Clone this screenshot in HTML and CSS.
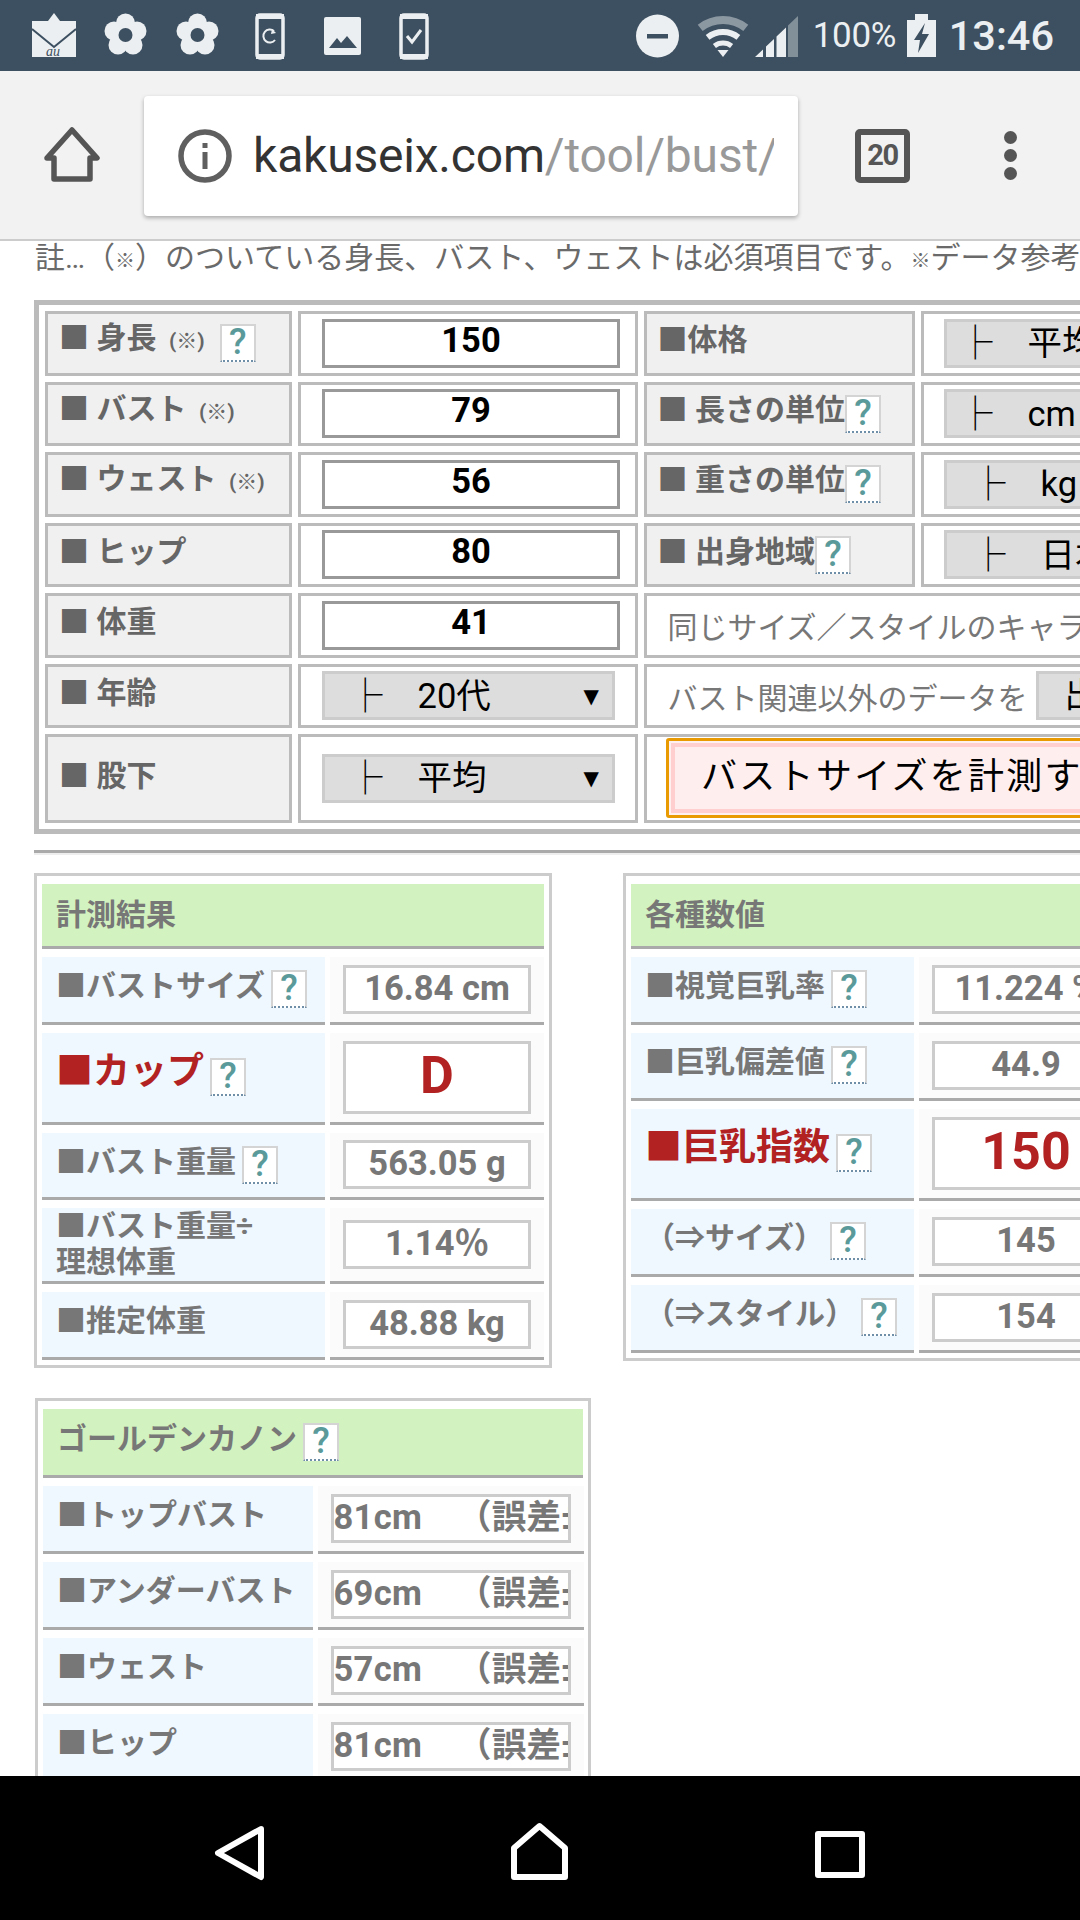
FILE: index.html
```html
<!DOCTYPE html>
<html lang="ja">
<head>
<meta charset="utf-8">
<title>バストサイズ計測</title>
<link rel="stylesheet" href="styles.css">
</head>
<body>
<div class="phone">
  <header class="status">
    <svg class="status-left" viewBox="30 0 400 71" width="400" height="71">
      <g fill="#eceff1">
        <path d="M32 21H48L54 13L60 21H76V57H32Z"/>
        <circle cx="125.500" cy="23" r="9.500"/><circle cx="137" cy="31" r="9.500"/><circle cx="133" cy="45" r="9.500"/><circle cx="118" cy="45" r="9.500"/><circle cx="114" cy="31" r="9.500"/>
        <circle cx="197.500" cy="23" r="9.500"/><circle cx="209" cy="31" r="9.500"/><circle cx="205" cy="45" r="9.500"/><circle cx="190" cy="45" r="9.500"/><circle cx="186" cy="31" r="9.500"/>
        <rect x="324" y="17" width="37" height="38" rx="2"/>
      </g>
      <path d="M32 29L54 47L76 29" fill="none" stroke="#3d5061" stroke-width="2"/>
      <text x="46" y="56" class="au">au</text>
      <circle cx="125.500" cy="35" r="7" fill="#3d5061"/>
      <circle cx="197.500" cy="35" r="7" fill="#3d5061"/>
      <g fill="none" stroke="#eceff1" stroke-width="3.500">
        <rect x="257" y="15" width="26" height="43" rx="3"/>
        <rect x="401" y="15" width="26" height="43" rx="3"/>
      </g>
      <g fill="#eceff1">
        <rect x="256" y="14" width="28" height="5"/><rect x="256" y="54" width="28" height="5"/>
        <rect x="400" y="14" width="28" height="5"/><rect x="400" y="54" width="28" height="5"/>
      </g>
      <path d="M274 31A6.500 6.500 0 1 0 275 40" fill="none" stroke="#eceff1" stroke-width="2"/>
      <path d="M272 29L276 33L271 34Z" fill="#eceff1"/>
      <path d="M407 36L412 42L421 30" fill="none" stroke="#eceff1" stroke-width="3"/>
      <path d="M329 48L337 38L341 43L347 36L357 48Z" fill="#3d5061"/>
    </svg>
    <div class="status-right">
      <svg class="status-icons" viewBox="636 0 164 71" width="164" height="71">
        <circle cx="658.500" cy="36" r="21.500" fill="#eceff1"/>
        <rect x="648" y="34" width="21" height="4.500" fill="#3d5061"/>
        <g fill="none" stroke="#eceff1">
          <path d="M701.200 27.800A37 37 0 0 1 746.800 27.800" stroke-width="8" opacity=".45"/>
          <path d="M708.600 37.300A25 25 0 0 1 739.400 37.300" stroke-width="6"/>
          <path d="M715.400 46A14 14 0 0 1 732.600 46" stroke-width="5"/>
        </g>
        <path d="M724 57L718.500 50H729.500Z" fill="#eceff1"/>
        <path d="M789 57V25.500L799 16V57Z" fill="#eceff1" opacity=".4"/>
        <path d="M756 57L764 49.500V57ZM767 57V46.500L775 39V57ZM777.500 57V36.500L787 27.500V57Z" fill="#eceff1"/>
      </svg>
      <span class="batt-text">100%</span>
      <svg class="batt" viewBox="908 0 30 71" width="30" height="71">
        <path d="M916 14H929V20H937V57H908V20H916Z" fill="#eceff1"/>
        <path d="M926 23L915 40H921L919 53L930 34H923Z" fill="#3d5061"/>
      </svg>
      <span class="clock">13:46</span>
    </div>
  </header>

  <nav class="toolbar">
    <svg class="tb-home" viewBox="0 0 56 56" width="56" height="56">
      <path d="M28 3L53 31H46V52H10V31H3Z" fill="none" stroke="#555" stroke-width="5.500" stroke-linejoin="round"/>
    </svg>
    <div class="urlbar">
      <svg class="info" viewBox="0 0 54 54" width="54" height="54">
        <circle cx="27" cy="27" r="24" fill="none" stroke="#5f5f5f" stroke-width="5.500"/>
        <rect x="24.500" y="23" width="5" height="17" fill="#5f5f5f"/>
        <rect x="24.500" y="14" width="5" height="5" fill="#5f5f5f"/>
      </svg>
      <div class="url"><span class="host">kakuseix.com</span><span class="path">/tool/bust/</span></div>
    </div>
    <div class="tabs">20</div>
    <div class="dots"><i></i><i></i><i></i></div>
  </nav>

  <main class="page">
    <p class="note">註…（<small>※</small>）のついている身長、バスト、ウェストは必須項目です。<small>※</small>データ参考</p>

    <section class="form">
      <div class="lab"><span class="t t-up">■ 身長 <small>(※)</small></span><span class="q q-first">?</span></div>
      <div class="val"><div class="inp">150</div></div>
      <div class="lab lab-r"><span class="t">■体格</span></div>
      <div class="val val-r"><div class="sel sel-a"><span class="tick">├</span><span>平均</span></div></div>

      <div class="lab"><span class="t t-up">■ バスト <small>(※)</small></span></div>
      <div class="val"><div class="inp">79</div></div>
      <div class="lab lab-r"><span class="t t-mid">■ 長さの単位</span><span class="q q-tight">?</span></div>
      <div class="val val-r"><div class="sel sel-a"><span class="tick">├</span><span>cm</span></div></div>

      <div class="lab"><span class="t t-up">■ ウェスト <small>(※)</small></span></div>
      <div class="val"><div class="inp">56</div></div>
      <div class="lab lab-r"><span class="t t-mid">■ 重さの単位</span><span class="q q-tight">?</span></div>
      <div class="val val-r"><div class="sel sel-b"><span class="tick">├</span><span>kg</span></div></div>

      <div class="lab"><span class="t">■ ヒップ</span></div>
      <div class="val"><div class="inp">80</div></div>
      <div class="lab lab-r"><span class="t">■ 出身地域</span><span class="q q-tight">?</span></div>
      <div class="val val-r"><div class="sel sel-b"><span class="tick">├</span><span>日本</span></div></div>

      <div class="lab"><span class="t">■ 体重</span></div>
      <div class="val"><div class="inp">41</div></div>
      <div class="val wide plain">同じサイズ／スタイルのキャラ</div>

      <div class="lab"><span class="t">■ 年齢</span></div>
      <div class="val"><div class="sel"><span class="tick">├</span><span class="grow">20代</span><span class="arrow">▼</span></div></div>
      <div class="val wide plain">バスト関連以外のデータを<div class="outbtn">出</div></div>

      <div class="lab"><span class="t t-low">■ 股下</span></div>
      <div class="val"><div class="sel"><span class="tick">├</span><span class="grow">平均</span><span class="arrow">▼</span></div></div>
      <div class="val wide btn-cell"><div class="submit">バストサイズを計測す</div></div>
    </section>

    <hr class="sep">

    <div class="results">
      <section class="box box-a">
        <h2 class="head">計測結果</h2>
        <div class="rows cols-a">
          <div class="k"><span class="t">■バストサイズ</span><span class="q">?</span></div>
          <div class="v"><div class="field">16.84 cm</div></div>
          <div class="k tall red"><span class="t">■カップ</span><span class="q">?</span></div>
          <div class="v tall"><div class="field big">D</div></div>
          <div class="k h67"><span class="t">■バスト重量</span><span class="q">?</span></div>
          <div class="v h67"><div class="field">563.05 g</div></div>
          <div class="k h76"><span class="two">■バスト重量÷<br>理想体重</span></div>
          <div class="v h76"><div class="field">1.14％</div></div>
          <div class="k"><span class="t">■推定体重</span></div>
          <div class="v"><div class="field">48.88 kg</div></div>
        </div>
      </section>

      <section class="box box-b">
        <h2 class="head">各種数値</h2>
        <div class="rows cols-b">
          <div class="k"><span class="t">■視覚巨乳率</span><span class="q">?</span></div>
          <div class="v"><div class="field">11.224 %</div></div>
          <div class="k"><span class="t">■巨乳偏差値</span><span class="q">?</span></div>
          <div class="v"><div class="field">44.9</div></div>
          <div class="k tall red"><span class="t">■巨乳指数</span><span class="q">?</span></div>
          <div class="v tall"><div class="field big">150</div></div>
          <div class="k"><span class="t">（⇒サイズ）</span><span class="q">?</span></div>
          <div class="v"><div class="field">145</div></div>
          <div class="k"><span class="t">（⇒スタイル）</span><span class="q">?</span></div>
          <div class="v"><div class="field">154</div></div>
        </div>
      </section>
    </div>

    <section class="box box-c">
      <h2 class="head"><span class="t">ゴールデンカノン</span><span class="q">?</span></h2>
      <div class="rows cols-c">
        <div class="k"><span class="t">■トップバスト</span></div>
        <div class="v"><div class="field left">81cm　（誤差±</div></div>
        <div class="k"><span class="t">■アンダーバスト</span></div>
        <div class="v"><div class="field left">69cm　（誤差±</div></div>
        <div class="k"><span class="t">■ウェスト</span></div>
        <div class="v"><div class="field left">57cm　（誤差±</div></div>
        <div class="k"><span class="t">■ヒップ</span></div>
        <div class="v"><div class="field left">81cm　（誤差±</div></div>
      </div>
    </section>
  </main>

  <footer class="navbar">
    <svg viewBox="0 1776 1080 144" width="1080" height="144">
      <g fill="none" stroke="#fff" stroke-width="6" stroke-linejoin="round">
        <path d="M261 1829L218 1853L261 1877Z"/>
        <path d="M514 1877V1848L539.500 1826L565 1848V1877Z"/>
        <rect x="818" y="1834" width="44" height="41"/>
      </g>
    </svg>
  </footer>
</div>
</body>
</html>
```

FILE: styles.css
```css
* { box-sizing: border-box; }
html, body { margin: 0; padding: 0; }
body {
  width: 1080px;
  height: 1920px;
  overflow: hidden;
  background: #fff;
  font-family: Roboto, "Noto Sans CJK JP", sans-serif;
}
.phone { display: flex; flex-direction: column; width: 1080px; height: 1920px; overflow: hidden; }

/* status bar */
.status { flex: none; height: 71px; background: #3d5061; display: flex; align-items: center; padding-left: 30px; color: #eceff1; }
.status-left { display: block; flex: none; }
.au { font: italic 14px "Liberation Serif", serif; fill: #3d5061; }
.status-right { margin-left: auto; display: flex; align-items: center; height: 71px; padding-right: 26px; }
.status-icons { display: block; }
.batt { display: block; margin-left: 9px; }
.batt-text { font-size: 35px; margin-left: 14px; width: 85px; letter-spacing: -.3px; }
.clock { font-size: 41.500px; margin-left: 12px; font-weight: 500; }

/* browser toolbar */
.toolbar { flex: none; height: 170px; background: #f2f2f2; border-bottom: 2px solid #ccc; display: flex; align-items: flex-start; }
.tb-home { display: block; flex: none; margin: 56px 0 0 44px; }
.urlbar { flex: none; width: 654px; height: 120px; margin: 25px 0 0 44px; background: #fff; border-radius: 4px; box-shadow: 0 2px 4px rgba(0,0,0,.3); display: flex; align-items: center; padding: 0 24px 0 34px; }
.info { display: block; flex: none; margin: 0 21px 0 0; }
.url { font-size: 48px; white-space: nowrap; overflow: hidden; flex: 1; min-width: 0; letter-spacing: -.2px; padding-bottom: 2px; }
.host { color: #333; }
.path { color: #999; }
.tabs { flex: none; width: 55px; height: 54px; margin: 58px 0 0 57px; border: 6px solid #555; border-radius: 5px; color: #555; font: bold 29px/41px Roboto, sans-serif; text-align: center; letter-spacing: -1.500px; }
.dots { flex: none; display: flex; flex-direction: column; gap: 5px; margin: 60px 0 0 94px; }
.dots i { display: block; width: 13px; height: 13px; border-radius: 50%; background: #555; }

/* page */
.page { flex: 1; min-height: 0; overflow: hidden; }
.note { margin: 0; height: 59px; padding: 0 0 0 35px; font-size: 30px; line-height: 34px; color: #6a6a6a; white-space: nowrap; overflow: hidden; }
.note small { font-size: 20px; }

/* main form */
.form { margin-left: 34px; width: 1400px; border: 5px solid #bbb; padding: 6px; display: grid; grid-template-columns: 247px 339.500px 271.500px 400px; grid-template-rows: repeat(6, 64.500px) 88.500px; gap: 6px; }
.lab { border: 3px solid #bbb; background: #f0f0f0; display: flex; align-items: center; padding-left: 11px; font-size: 30px; font-weight: bold; color: #666; white-space: nowrap; line-height: 1; }
.lab-r { padding-left: 11px; }
.lab small { font-size: 21px; font-weight: bold; margin-left: 5px; }
.t { margin-bottom: 6px; }
.t-up { margin-bottom: 10px; }
.t-mid { margin-bottom: 8px; }
.t-low { margin-bottom: 4px; }
.q { flex: none; display: inline-block; width: 36px; height: 38px; background: #fff; border: 2px solid #d4d4d4; border-bottom: 2px dotted #6f8ea8; color: #5a9a9a; font: 500 36px/33px Roboto, sans-serif; text-align: center; margin-left: 6px; }
.q-first { margin-left: 15px; }
.q-tight { margin-left: 0; }
.val { border: 3px solid #bbb; background: #fff; display: flex; align-items: center; padding-left: 21px; }
.val-r { padding-left: 20px; }
.inp { width: 298px; height: 49px; border: 3px solid #999; background: #fff; color: #000; font-size: 34.500px; font-weight: bold; line-height: 37px; text-align: center; }
.sel { width: 293px; height: 49px; border: 3px solid #ccc; background: #ddd; color: #000; font-size: 34.500px; line-height: 40px; display: flex; align-items: center; padding: 0 13px 0 23px; white-space: nowrap; flex: none; }
.val-r .sel { width: 400px; }
.sel-a { padding-left: 11px; }
.sel-b { padding-left: 24px; }
.tick { flex: none; width: 33px; margin-right: 36.500px; }
.grow { flex: 1; }
.arrow { flex: none; font: 20px "DejaVu Sans", sans-serif; }
.wide { grid-column: 3 / 5; }
.plain { padding-left: 21px; font-size: 30px; color: #777; white-space: nowrap; overflow: hidden; }
.outbtn { flex: none; width: 200px; height: 49px; margin-left: 8px; border: 3px solid #ccc; background: #ddd; color: #000; font-size: 34.500px; line-height: 42px; padding-left: 26px; }
.btn-cell { padding-left: 19.500px; }
.submit { width: 600px; height: 80px; border: 3px solid #e99a00; border-radius: 3px; box-shadow: inset 0 0 0 2px #fff0f0, inset 0 0 0 6px #ffcfcf; background: #ffeeee; color: #000; font-size: 36px; letter-spacing: 2.300px; line-height: 72px; padding-left: 32px; white-space: nowrap; }

.sep { margin: 16px 0 0 34px; width: 1046px; height: 3px; border: 0; background: #aaa; box-shadow: 0 2px 0 #eee; }

/* result boxes */
.results { display: flex; align-items: flex-start; margin-top: 20px; padding-left: 34px; width: 1400px; }
.box { flex: none; border: 3px solid #ccc; padding: 8px 5px 5px; background: #fff; }
.box-a { width: 518px; }
.box-b { width: 700px; margin-left: 71px; }
.box-c { width: 556px; margin: 30px 0 0 35px; }
.head { margin: 0 0 8px; height: 65px; background: #d2f2bf; border-bottom: 3px solid #aaa; display: flex; align-items: center; padding-left: 14px; font-size: 30px; font-weight: bold; color: #777; line-height: 1; white-space: nowrap; }
.box-c .head { height: 69px; }
.rows { display: grid; row-gap: 8px; }
.cols-a { grid-template-columns: 282.500px 214px; column-gap: 5.500px; }
.cols-b { grid-template-columns: 283px 400px; column-gap: 5px; }
.cols-c { grid-template-columns: 269.500px 266.500px; column-gap: 5px; }
.k { height: 68px; border-bottom: 3px solid #aaa; background: #eff7ff; display: flex; align-items: center; padding-left: 14px; font-size: 30px; font-weight: bold; color: #777; line-height: 1; white-space: nowrap; }
.v { height: 68px; border-bottom: 3px solid #aaa; background: #fbfbfb; display: flex; align-items: center; padding-left: 13px; }
.field { width: 188px; height: 49px; border: 3px solid #ccc; background: #fff; color: #777; font-size: 34.500px; font-weight: bold; line-height: 40px; text-align: center; white-space: nowrap; overflow: hidden; flex: none; }
.cols-c .field { width: 240px; }
.left { text-align: left; padding-left: 0; text-spacing-trim: space-all; letter-spacing: .3px; }
.tall { height: 92px; }
.h67 { height: 67px; }
.h76 { height: 76px; }
.red { color: #b22222; font-size: 37px; }
.red .t { margin-bottom: 12px; }
.big { height: 73px; color: #b22222; font-size: 52px; line-height: 64px; }
.two { line-height: 36px; }

/* navigation */
.navbar { flex: none; height: 144px; background: #000; }
.navbar svg { display: block; }
```
